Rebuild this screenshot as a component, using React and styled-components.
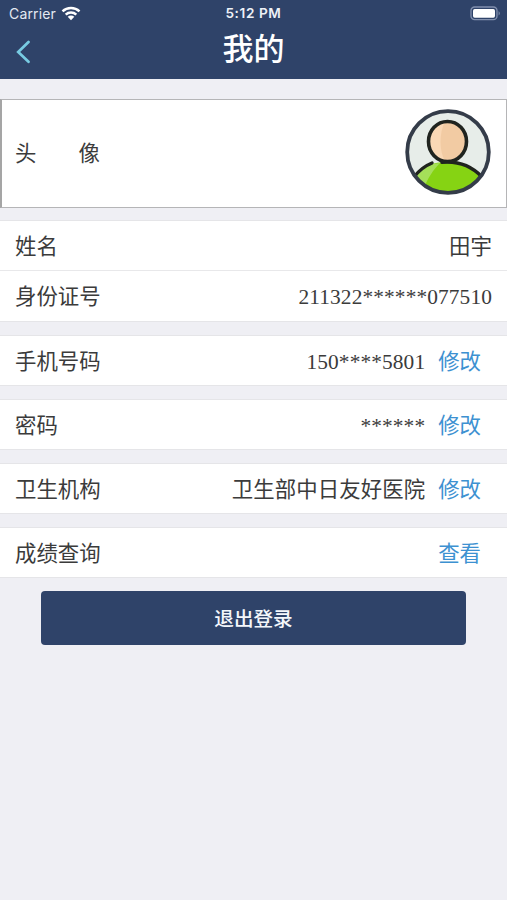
import styled, { createGlobalStyle } from 'styled-components'

const groups = [
	[
		{ label: '姓名', value: '田宇' },
		{ label: '身份证号', value: '211322******077510' },
	],
	[{ label: '手机号码', value: '150****5801', action: '修改' }],
	[{ label: '密码', value: '******', action: '修改' }],
	[{ label: '卫生机构', value: '卫生部中日友好医院', action: '修改' }],
	[{ label: '成绩查询', action: '查看' }],
]

export default function App() {
	return (
		<Page>
			<GlobalStyle />
			<Header>
				<StatusBar>
					<Carrier>
						<span>Carrier</span>
						<WifiIcon />
					</Carrier>
					<Time>5:12 PM</Time>
					<BatteryIcon />
				</StatusBar>
				<NavBar>
					<BackButton aria-label="返回">
						<svg width="15" height="24" viewBox="0 0 15 24">
							<path
								d="M13.5 2L3.2 12L13.5 21.8"
								fill="none"
								stroke="#78cbe2"
								strokeWidth="2.7"
								strokeLinecap="round"
							/>
						</svg>
					</BackButton>
					<Title>我的</Title>
					<span />
				</NavBar>
			</Header>

			<AvatarRow>
				<AvatarLabel>
					<span>头</span>
					<span>像</span>
				</AvatarLabel>
				<Avatar />
			</AvatarRow>

			{groups.map((rows) => (
				<Group key={rows[0].label}>
					{rows.map((row) => (
						<Row key={row.label}>
							<span>{row.label}</span>
							<Value>{row.value}</Value>
							{row.action && <Action>{row.action}</Action>}
						</Row>
					))}
				</Group>
			))}

			<LogoutButton>退出登录</LogoutButton>
		</Page>
	)
}

function WifiIcon() {
	return (
		<svg width="20" height="15" viewBox="0 0 20 15">
			<g fill="none" stroke="#fff" strokeWidth="2.5">
				<path d="M1.5 5.3C6.2.9 13.8.9 18.5 5.3" />
				<path d="M4.7 8.7C7.7 5.9 12.3 5.9 15.3 8.7" />
			</g>
			<path d="M6.7 10.8C8.6 9.1 11.4 9.1 13.3 10.8L10 14.2Z" fill="#fff" />
		</svg>
	)
}

function BatteryIcon() {
	return (
		<svg width="31" height="15" viewBox="0 0 31 15">
			<rect
				x="1"
				y="1"
				width="26"
				height="12.6"
				rx="3.6"
				fill="none"
				stroke="#8290ae"
				strokeWidth="1.3"
			/>
			<rect x="3" y="3" width="22" height="8.8" rx="1.7" fill="#fff" />
			<path d="M28.6 5Q31 7.3 28.6 9.6Z" fill="#8290ae" />
		</svg>
	)
}

function Avatar() {
	return (
		<svg width="88" height="88" viewBox="0 0 88 88">
			<defs>
				<clipPath id="frame">
					<circle cx="44" cy="44" r="41" />
				</clipPath>
			</defs>
			<circle cx="44" cy="44" r="41" fill="#e7ede9" />
			<g clipPath="url(#frame)">
				<path
					d="M10 69C19 58 29 54 43 54C58 54 69 59 78 69V90H10Z"
					fill="#86d313"
				/>
				<path d="M11 69C18 60 26 56 36 55C29 62 24 70 20 80Z" fill="#a5df59" />
				<path
					d="M10 69C15 62.5 21 57.8 28 55M38 54.3C55 52.8 68 58.5 78 69"
					fill="none"
					stroke="#20241f"
					strokeWidth="3.4"
					strokeLinecap="round"
				/>
			</g>
			<ellipse cx="43.5" cy="33.5" rx="19" ry="20" fill="#f2cba3" />
			<path
				d="M41 13.5C31 14 24.5 23 24.5 33.5S31 52 41 53C35 43 35 25 41 13.5Z"
				fill="#fad8b5"
			/>
			<ellipse
				cx="43.5"
				cy="33.5"
				rx="19"
				ry="20"
				fill="none"
				stroke="#20241f"
				strokeWidth="3.6"
			/>
			<circle
				cx="44"
				cy="44"
				r="40.8"
				fill="none"
				stroke="#343c49"
				strokeWidth="3.8"
			/>
		</svg>
	)
}

const GlobalStyle = createGlobalStyle`
	* {
		box-sizing: border-box;
	}

	body {
		margin: 0;
		background: #efeff4;
	}
`

const Page = styled.div`
	display: flex;
	flex-direction: column;
	min-height: 100vh;
	color: #3b3b3b;
	font-family: 'Liberation Serif', 'Noto Sans CJK SC', serif;
	font-size: 21.4px;
	line-height: 30px;
`

const Header = styled.header`
	height: 79px;
	background: #2f4369;
	color: #fff;
`

const StatusBar = styled.div`
	display: grid;
	grid-template-columns: 1fr auto 1fr;
	align-items: center;
	height: 27px;
	padding: 0 6px;
	font-family: Inter, sans-serif;
	font-size: 14px;
	line-height: 27px;

	> svg {
		justify-self: end;
	}
`

const Carrier = styled.div`
	display: flex;
	align-items: center;
	gap: 5px;
	margin-left: 3px;
	color: #e4e9f2;
	letter-spacing: 0.15px;
`

const Time = styled.span`
	color: #edf1f7;
	font-size: 13.6px;
	font-weight: 600;
	letter-spacing: 0.6px;
`

const NavBar = styled.div`
	display: grid;
	grid-template-columns: 1fr auto 1fr;
	align-items: center;
	height: 44px;
	padding: 0 15px;
`

const BackButton = styled.button`
	display: flex;
	justify-self: start;
	margin-top: 6px;
	padding: 0;
	border: 0;
	background: none;
`

const Title = styled.h1`
	margin: 0;
	padding-bottom: 4px;
	font-family: 'Noto Sans CJK SC', sans-serif;
	font-size: 31px;
	font-weight: 500;
	line-height: 40px;
`

const AvatarRow = styled.div`
	display: flex;
	align-items: center;
	justify-content: space-between;
	height: 109px;
	margin-top: 20px;
	padding: 0 14px 0 13px;
	border: 1px solid #b5b5b7;
	border-left: 2px solid #a5a5a5;
	background: #fff;

	> svg {
		margin-bottom: 3px;
	}
`

const AvatarLabel = styled.div`
	display: flex;
	justify-content: space-between;
	width: 85px;
`

const Group = styled.section`
	margin-top: 13px;
	border-top: 1px solid #e5e5e8;
	border-bottom: 1px solid #e5e5e8;

	${AvatarRow} + & {
		margin-top: 12px;
	}
`

const Row = styled.div`
	display: flex;
	align-items: center;
	height: 49px;
	padding: 2px 15px 0;
	background: #fff;

	& + & {
		height: 51px;
		border-top: 1px solid #e8e8ea;
	}
`

const Value = styled.span`
	margin-left: auto;
	letter-spacing: 0.1px;
`

const Action = styled.a`
	margin: 0 11px 0 13px;
	color: #3d91d1;
`

const LogoutButton = styled.button`
	height: 54px;
	margin: 13px 41px 0;
	padding: 0 0 2px;
	border: 0;
	border-radius: 4px;
	background: #2f4369;
	color: #f4f7fb;
	font-family: 'Noto Sans CJK SC', sans-serif;
	font-size: 19.6px;
	font-weight: 500;
`
